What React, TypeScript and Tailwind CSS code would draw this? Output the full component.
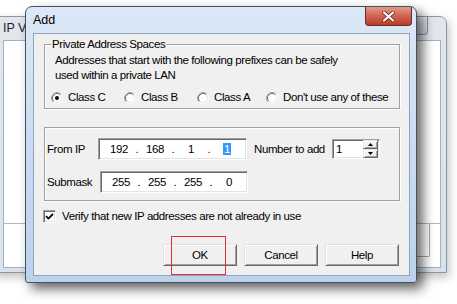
import React from "react";

const sunken =
  "bg-white border border-t-[#a0a0a0] border-l-[#a0a0a0] border-b-white border-r-white shadow-[inset_1px_1px_0_#696969,inset_-1px_-1px_0_#e3e3e3]";
const raised =
  "bg-[#f0f0f0] border border-t-[#e3e3e3] border-l-[#e3e3e3] border-b-[#696969] border-r-[#696969] shadow-[inset_1px_1px_0_#ffffff,inset_-1px_-1px_0_#a0a0a0]";
const etched = "border border-[#a0a0a0] shadow-[inset_1px_1px_0_#ffffff,1px_1px_0_#ffffff]";

const Radio = ({ checked, label, width }: { checked?: boolean; label: string; width?: string }) => (
  <div className={`flex items-center gap-[5px] ${width ?? ""}`}>
    <svg width="12" height="12" viewBox="0 0 12 12" className="shrink-0">
      <circle cx="6" cy="6" r="5" fill="#fff" />
      <path d="M2.11 9.89A5.5 5.5 0 0 1 9.89 2.11" stroke="#a0a0a0" fill="none" />
      <path d="M9.89 2.11A5.5 5.5 0 0 1 2.11 9.89" stroke="#ffffff" fill="none" />
      <path d="M2.82 9.18A4.5 4.5 0 0 1 9.18 2.82" stroke="#696969" fill="none" />
      <path d="M9.18 2.82A4.5 4.5 0 0 1 2.82 9.18" stroke="#e3e3e3" fill="none" />
      {checked && <circle cx="6" cy="6" r="2" fill="#000" />}
    </svg>
    <span className="whitespace-nowrap">{label}</span>
  </div>
);

const IpField = ({ parts, selectLast, width }: { parts: string[]; selectLast?: boolean; width: string }) => (
  <div className={`${sunken} ${width} h-[22px] flex items-center pl-[6px]`}>
    {parts.map((p, i) => (
      <React.Fragment key={i}>
        {i > 0 && <span className="w-[8px] text-center">.</span>}
        <span className="w-[28px] text-center">
          {selectLast && i === parts.length - 1 ? (
            <span className="bg-[#3399ff] text-white px-[1px] leading-[12px] inline-block">{p}</span>
          ) : (
            p
          )}
        </span>
      </React.Fragment>
    ))}
  </div>
);

const Arrow = ({ up }: { up?: boolean }) => (
  <svg width="5" height="3" viewBox="0 0 5 3">
    <path d={up ? "M2.5 0L5 3H0Z" : "M0 0H5L2.5 3Z"} fill="#000" />
  </svg>
);

const BackWindow = () => (
  <div className="absolute left-[-8px] top-[16px] w-[455px] h-[257px] rounded-t-[7px] border border-[#8d98a5] bg-gradient-to-b from-[#e2e7ed] to-[#d9e1ea] shadow-[2px_4px_10px_rgba(0,0,0,0.25)] flex flex-col px-[10px] pb-[4px] pr-[5px]">
    <div className="h-[23px] flex items-center text-[12.5px] text-[#222] font-['Liberation_Sans',sans-serif]">
      IP V
    </div>
    <div className="absolute right-[18px] top-[0px] w-[30px] h-[18px] rounded-b-[4px] border border-[#8a9099] border-t-0 bg-gradient-to-b from-[#e9edf2] to-[#d3d9e0] flex items-center justify-center">
      <svg width="10" height="9" viewBox="0 0 10 9">
        <path d="M1 1L9 8M9 1L1 8" stroke="#7d848c" strokeWidth="2" />
      </svg>
    </div>
    <div className="flex-1 bg-white border border-[#a4b0bd] flex flex-col justify-end">
      <div className="h-[44px] border-t border-[#b5b5b5] flex justify-end pr-[10px]">
        <div className="w-[70px] h-[33px] border border-[#a6a6a6] border-t-0 rounded-b-[2px]" />
      </div>
    </div>
  </div>
);

const Dialog = () => (
  <div className="absolute left-[25px] top-[6px] w-[392px] h-[277px] rounded-t-[7px] rounded-b-[3px] border border-[#44525f] bg-gradient-to-b from-[#dbe8f6] via-[#c9dcf1] to-[#bcd2ec] shadow-[6px_6px_12px_rgba(0,0,0,0.6)] flex flex-col pl-[7px] pr-[6px] pb-[6px]">
    <div className="h-[26px] flex items-center text-[12.5px] text-black font-['Liberation_Sans',sans-serif]">
      Add
    </div>
    <div className="absolute right-[4px] top-[0px] w-[47px] h-[19px] rounded-b-[4px] border border-[#6b2a22] border-t-0 bg-gradient-to-b from-[#e49a8b] via-[#d0624f] to-[#bd3a29] flex items-center justify-center">
      <svg width="13" height="11" viewBox="0 0 13 11">
        <path d="M2 1.5L11 9.5M11 1.5L2 9.5" stroke="#5c2219" strokeWidth="3.6" strokeLinecap="round" />
        <path d="M2 1.5L11 9.5M11 1.5L2 9.5" stroke="#ffffff" strokeWidth="2.2" strokeLinecap="round" />
      </svg>
    </div>
    <div className="flex-1 border border-[#8ea3be] bg-[#f0f0f0] flex flex-col text-[11.5px] tracking-[-0.4px] leading-[15px] text-black font-['Liberation_Sans',sans-serif]">
      <div className={`relative ml-[10px] mt-[10px] w-[356px] h-[65px] ${etched} pl-[10px] pt-[8px]`}>
        <span className="absolute left-[6px] top-[-8px] px-[1px] bg-[#f0f0f0]">Private Address Spaces</span>
        <div>Addresses that start with the following prefixes can be safely</div>
        <div>used within a private LAN</div>
        <div className="flex mt-[7px] -ml-[4px]">
          <Radio checked label="Class C" width="w-[73px]" />
          <Radio label="Class B" width="w-[73px]" />
          <Radio label="Class A" width="w-[69px]" />
          <Radio label="Don't use any of these" />
        </div>
      </div>

      <div className={`ml-[10px] mt-[18px] w-[356px] h-[74px] ${etched} pl-[2px] pt-[10px]`}>
        <div className="flex items-center h-[22px]">
          <span className="w-[51px]">From IP</span>
          <IpField parts={["192", "168", "1", "1"]} selectLast width="w-[149px]" />
          <span className="ml-[7px] w-[78px] whitespace-nowrap">Number to add</span>
          <div className={`${sunken} w-[48px] h-[20px] flex items-center pl-[3px] pr-[1px]`}>
            <span className="flex-1">1</span>
            <div className="flex flex-col w-[15px] h-[18px]">
              <div className={`${raised} flex-1 flex items-center justify-center`}>
                <Arrow up />
              </div>
              <div className={`${raised} flex-1 flex items-center justify-center`}>
                <Arrow />
              </div>
            </div>
          </div>
        </div>
        <div className="flex items-center h-[22px] mt-[11px]">
          <span className="w-[53px]">Submask</span>
          <IpField parts={["255", "255", "255", "0"]} width="w-[148px]" />
        </div>
      </div>

      <div className="flex items-center gap-[6px] ml-[9px] mt-[8px]">
        <div className={`${sunken} w-[13px] h-[13px] flex items-center justify-center`}>
          <svg width="9" height="9" viewBox="0 0 9 9">
            <path d="M1 4.2L3.4 6.6L8 2" stroke="#000" strokeWidth="1.8" fill="none" />
          </svg>
        </div>
        <span>Verify that new IP addresses are not already in use</span>
      </div>

      <div className="flex gap-[7px] self-end mr-[10px] mt-[20px]">
        {["OK", "Cancel", "Help"].map(b => (
          <div key={b} className={`${raised} w-[74px] h-[22px] flex items-center justify-center`}>
            {b}
          </div>
        ))}
      </div>
    </div>
  </div>
);

export default function App() {
  return (
    <div className="relative w-[457px] h-[304px] overflow-hidden bg-white">
      <BackWindow />
      <Dialog />
      <div className="absolute left-[171px] top-[236px] w-[55px] h-[39px] border border-[#e0303c]" />
    </div>
  );
}
